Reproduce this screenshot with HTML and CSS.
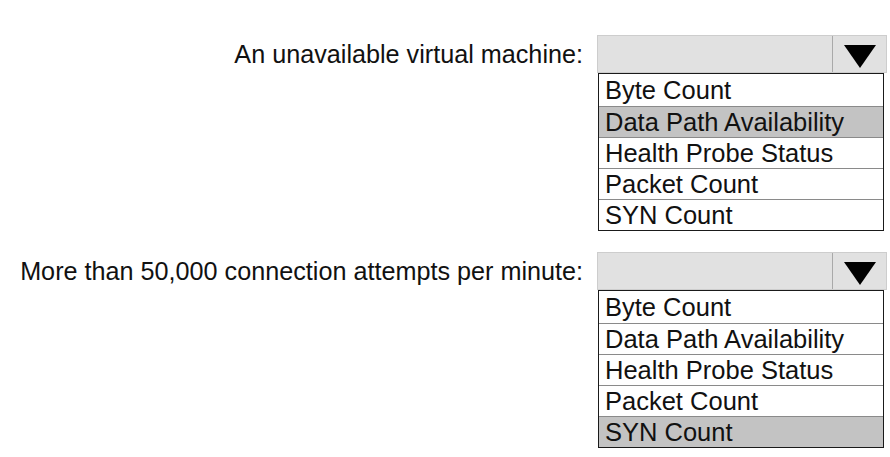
FILE: index.html
```html
<!DOCTYPE html>
<html lang="en">
<head>
  <meta charset="UTF-8" />
  <title>Load Balancer Metrics</title>
  <link rel="stylesheet" href="styles.css">
</head>
<body>
  <main class="answer-area">
    <!-- Question 1 -->
    <div class="answer-row">
      <div class="answer-label">An unavailable virtual machine:</div>
      <div class="dropdown">
        <div class="dropdown-head">
          <span class="dropdown-value"></span>
          <span class="dropdown-arrow"><span class="triangle"></span></span>
        </div>
        <ul class="dropdown-list">
          <li>Byte Count</li>
          <li class="selected">Data Path Availability</li>
          <li>Health Probe Status</li>
          <li>Packet Count</li>
          <li>SYN Count</li>
        </ul>
      </div>
    </div>

    <!-- Question 2 -->
    <div class="answer-row">
      <div class="answer-label">More than 50,000 connection attempts per minute:</div>
      <div class="dropdown">
        <div class="dropdown-head">
          <span class="dropdown-value"></span>
          <span class="dropdown-arrow"><span class="triangle"></span></span>
        </div>
        <ul class="dropdown-list">
          <li>Byte Count</li>
          <li>Data Path Availability</li>
          <li>Health Probe Status</li>
          <li>Packet Count</li>
          <li class="selected">SYN Count</li>
        </ul>
      </div>
    </div>
  </main>
</body>
</html>
```

FILE: styles.css
```css
* {
  box-sizing: border-box;
}

body {
  margin: 0;
  background: #fff;
  font-family: "Liberation Sans", Arial, sans-serif;
  color: #111;
}

.answer-area {
  display: flex;
  flex-direction: column;
  gap: 21px;
  padding-top: 35px;
}

.answer-row {
  display: flex;
  align-items: flex-start;
  gap: 14px;
}

.answer-label {
  width: 583px;
  height: 38px;
  line-height: 38px;
  text-align: right;
  font-size: 25.2px;
}

.dropdown {
  width: 290px;
}

.dropdown-head {
  display: flex;
  height: 38px;
  background: #e1e1e1;
  border: 1px solid #cdcdcd;
}

.dropdown-value {
  flex: 1;
}

.dropdown-arrow {
  width: 54px;
  display: flex;
  align-items: center;
  justify-content: center;
  border-left: 1px solid #a9a9a9;
  padding-top: 4px;
}

.triangle {
  width: 0;
  height: 0;
  border-left: 16px solid transparent;
  border-right: 16px solid transparent;
  border-top: 23px solid #000;
}

.dropdown-list {
  list-style: none;
  margin: 0 3px 0 1px;
  padding: 0;
  border: 1px solid #1a1a1a;
  background: #fff;
}

.dropdown-list li {
  height: 31px;
  line-height: 31px;
  padding-left: 6px;
  font-size: 25.5px;
  border-top: 1px solid #8a8a8a;
}

.dropdown-list li:first-child {
  border-top: none;
  height: 32px;
  line-height: 33px;
}

.dropdown-list li.selected {
  background: #c3c3c3;
}
```
